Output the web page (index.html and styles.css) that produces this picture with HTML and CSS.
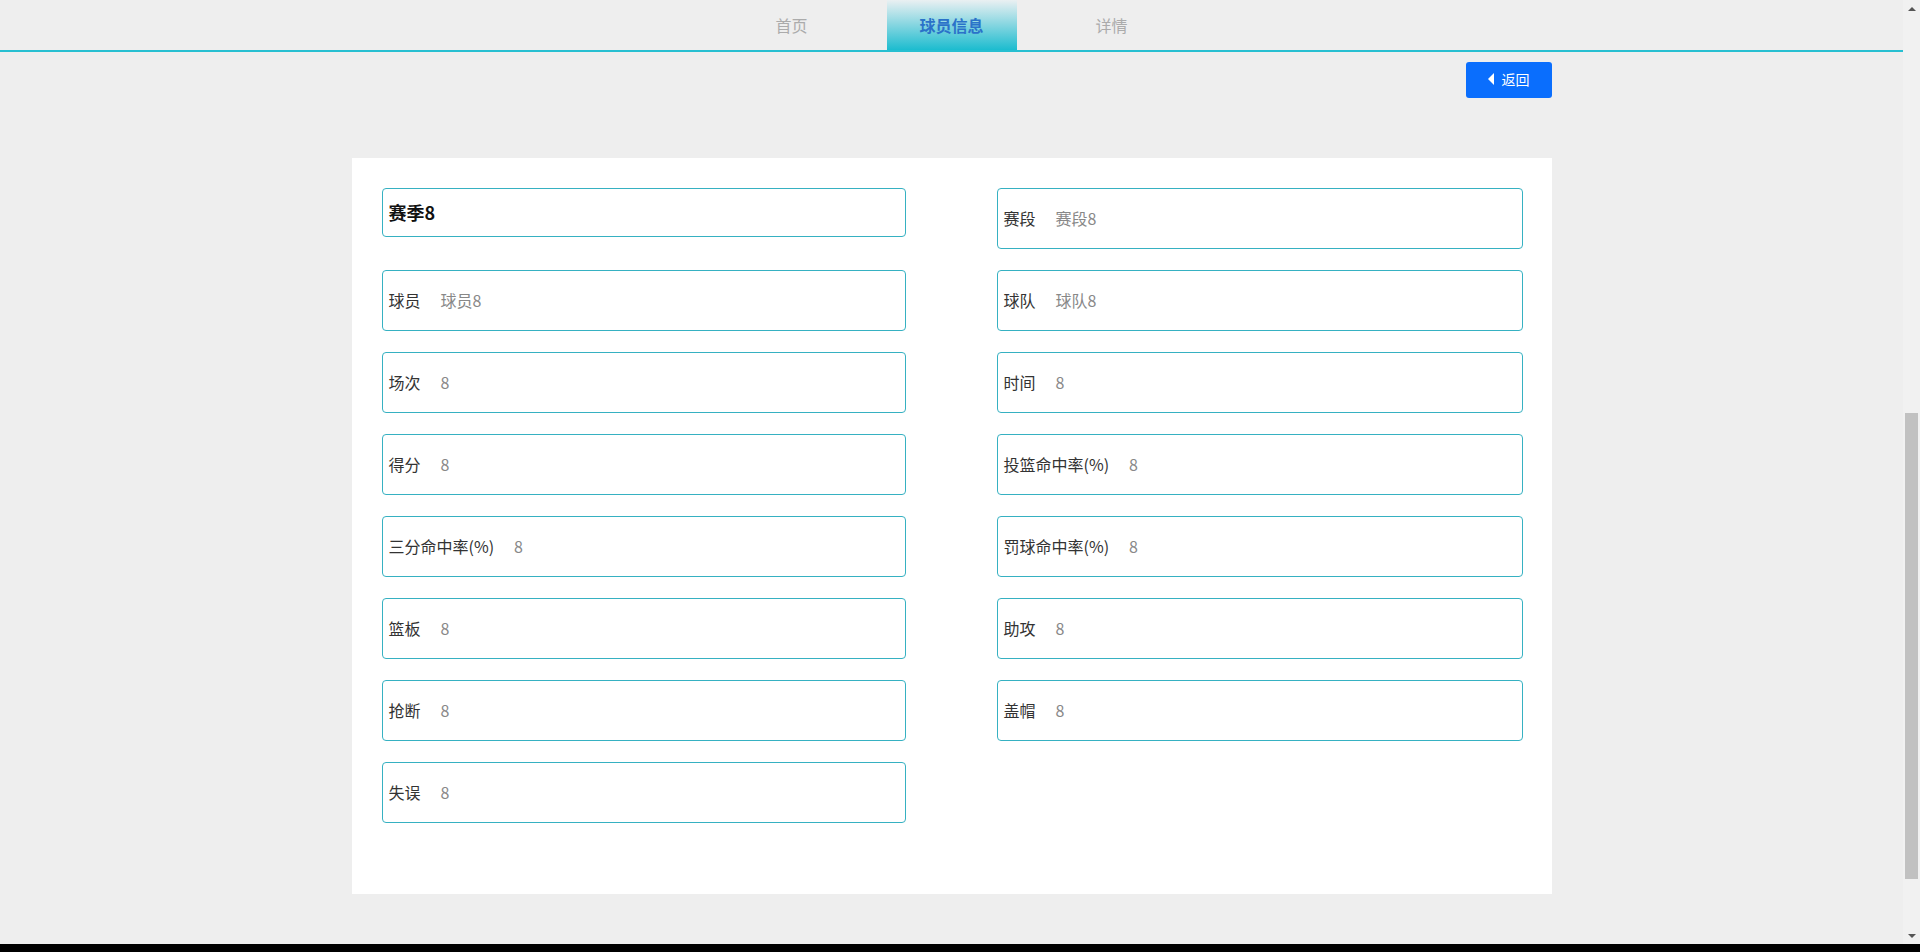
FILE: index.html
```html
<!DOCTYPE html>
<html lang="zh-CN">
<head>
  <meta charset="UTF-8" />
  <title>球员信息</title>
  <link rel="stylesheet" href="styles.css">
</head>
<body>

<div class="window">
  <div class="page">
    <!-- top tabs -->
    <div class="nav">
      <a class="nav-item">首页</a>
      <a class="nav-item active">球员信息</a>
      <a class="nav-item">详情</a>
    </div>

    <div class="toolbar">
      <button class="back-btn"><span class="arrow"></span>返回</button>
    </div>

    <div class="card">
      <div class="field title">赛季8</div>
      <div class="field"><span class="label">赛段</span><span class="value">赛段8</span></div>

      <div class="field"><span class="label">球员</span><span class="value">球员8</span></div>
      <div class="field"><span class="label">球队</span><span class="value">球队8</span></div>

      <div class="field"><span class="label">场次</span><span class="value">8</span></div>
      <div class="field"><span class="label">时间</span><span class="value">8</span></div>

      <div class="field"><span class="label">得分</span><span class="value">8</span></div>
      <div class="field"><span class="label">投篮命中率(%)</span><span class="value">8</span></div>

      <div class="field"><span class="label">三分命中率(%)</span><span class="value">8</span></div>
      <div class="field"><span class="label">罚球命中率(%)</span><span class="value">8</span></div>

      <div class="field"><span class="label">篮板</span><span class="value">8</span></div>
      <div class="field"><span class="label">助攻</span><span class="value">8</span></div>

      <div class="field"><span class="label">抢断</span><span class="value">8</span></div>
      <div class="field"><span class="label">盖帽</span><span class="value">8</span></div>

      <div class="field"><span class="label">失误</span><span class="value">8</span></div>
    </div>
  </div>

  <!-- fake scrollbar -->
  <div class="scrollbar">
    <div class="sb-btn"><span class="sb-up"></span></div>
    <div class="sb-track"><div class="sb-thumb"></div></div>
    <div class="sb-btn"><span class="sb-down"></span></div>
  </div>
</div>
<div class="taskbar"></div>

</body>
</html>
```

FILE: styles.css
```css
* {
  box-sizing: border-box;
  font-family: "Noto Sans CJK SC", "Liberation Sans", sans-serif;
}

html, body {
  margin: 0;
  height: 100%;
  overflow: hidden;
  background: #eeeeee;
}

.window {
  display: flex;
  height: 944px;
}

.page {
  flex: 1;
  display: flex;
  flex-direction: column;
  align-items: center;
}

.nav {
  align-self: stretch;
  display: flex;
  justify-content: center;
  gap: 30px;
  height: 52px;
  border-bottom: 2px solid #27bfd1;
}

.nav-item {
  width: 130px;
  display: flex;
  align-items: center;
  justify-content: center;
  font-size: 16px;
  color: #ababab;
}

.nav-item.active {
  background: linear-gradient(180deg, #eaf0f2 0%, #8fd8e2 45%, #1cbccf 100%);
  color: #2a72c9;
  font-weight: bold;
}

.toolbar {
  width: 1200px;
  display: flex;
  justify-content: flex-end;
  margin-top: 10px;
}

.back-btn {
  width: 86px;
  height: 36px;
  border: none;
  border-radius: 3px;
  background: #0a6efd;
  color: #fff;
  font-size: 14px;
  display: flex;
  align-items: center;
  justify-content: center;
  gap: 8px;
  padding: 0 0 2px;
}

.back-btn .arrow {
  width: 0;
  height: 0;
  border-top: 6px solid transparent;
  border-bottom: 6px solid transparent;
  border-right: 6px solid #fff;
}

.card {
  width: 1200px;
  margin-top: 60px;
  background: #fff;
  padding: 30px 29px 71px 30px;
  display: grid;
  grid-template-columns: 524px 526px;
  justify-content: space-between;
  align-items: start;
  row-gap: 21px;
}

.field {
  height: 61px;
  border: 1px solid #36b1c2;
  border-radius: 4px;
  display: flex;
  align-items: center;
  padding: 0 6px 2px;
  font-size: 16px;
}

.field.title {
  height: 49px;
  font-size: 18px;
  font-weight: bold;
  color: #111;
}

.label {
  color: #333;
}

.value {
  margin-left: 20px;
  color: #888;
}

.scrollbar {
  width: 17px;
  background: #f1f1f1;
  display: flex;
  flex-direction: column;
}

.sb-btn {
  height: 17px;
  display: flex;
  align-items: center;
  justify-content: center;
}

.sb-up,
.sb-down {
  width: 0;
  height: 0;
  border-left: 4px solid transparent;
  border-right: 4px solid transparent;
}

.sb-up {
  border-bottom: 4px solid #555;
}

.sb-down {
  border-top: 4px solid #555;
}

.sb-track {
  flex: 1;
  display: flex;
  justify-content: center;
}

.sb-thumb {
  width: 13px;
  height: 466px;
  margin-top: 396px;
  background: #c1c1c1;
}

.taskbar {
  height: 8px;
  background: #000;
}
```
